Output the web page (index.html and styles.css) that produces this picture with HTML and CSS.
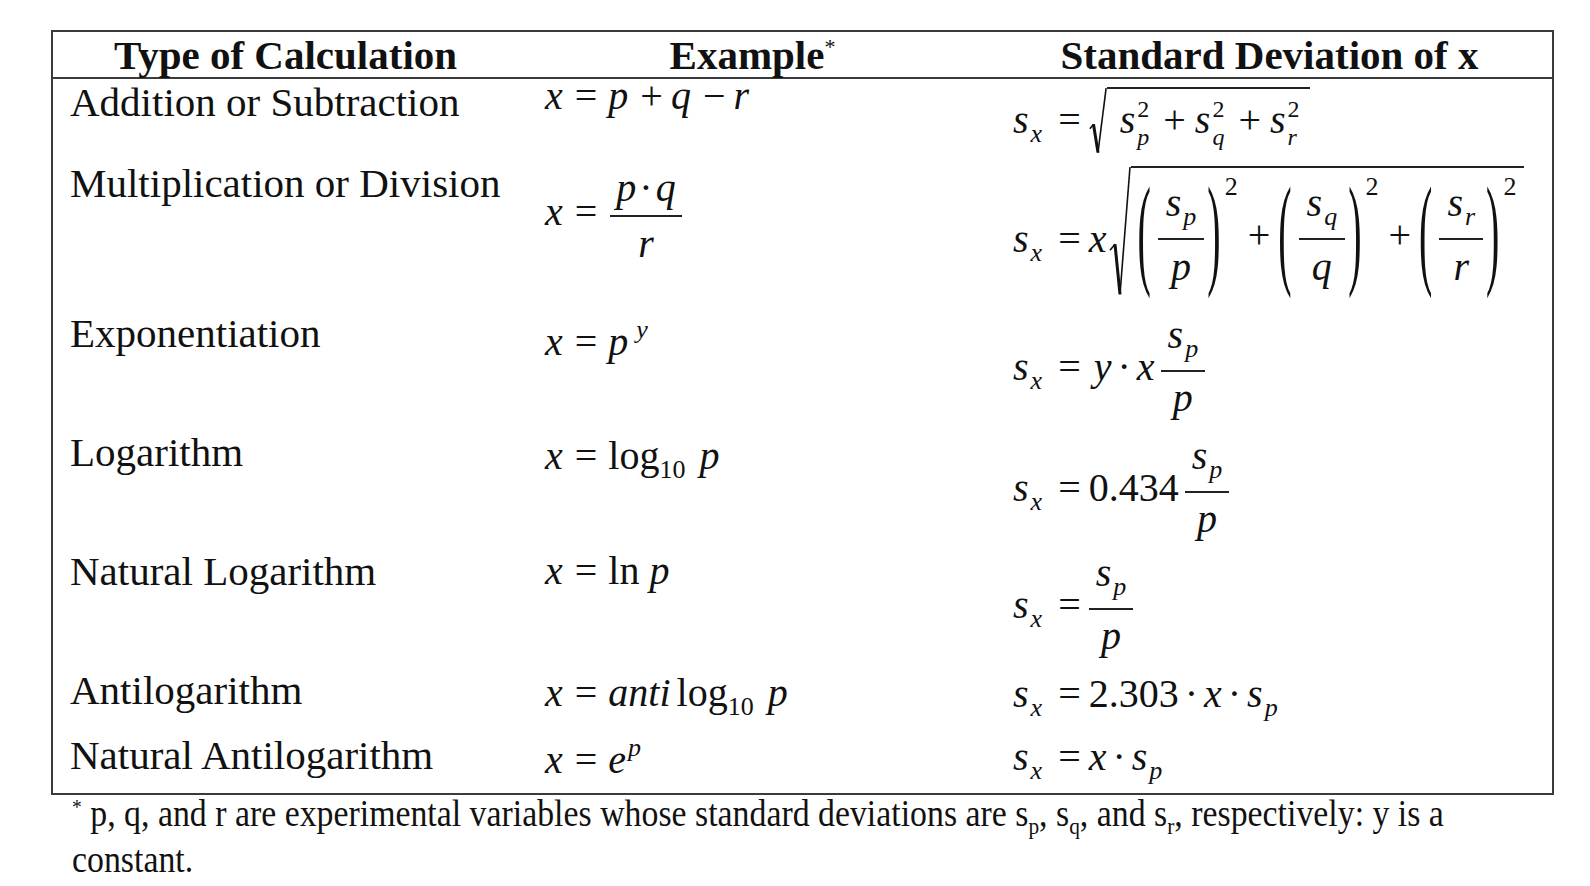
FILE: index.html
```html
<!DOCTYPE html>
<html lang="en">
<head>
<meta charset="utf-8">
<title>Propagation of uncertainty</title>
<link rel="stylesheet" href="styles.css">
</head>
<body>
<div class="page">
  <div class="tbl">
    <div class="row head">
      <div class="cell">Type of Calculation</div>
      <div class="cell">Example<span class="star">*</span></div>
      <div class="cell">Standard Deviation of x</div>
    </div>

    <div class="row r1">
      <div class="cell lab">Addition or Subtraction</div>
      <div class="cell ex"><var>x</var><span class="eq">=</span><var>p</var><span class="bin">+</span><var>q</var><span class="bin">−</span><var>r</var></div>
      <div class="cell sd"><var>s</var><var class="sub">x</var><span class="eq">=</span><span class="sqrt"><svg class="rad rad-sm" viewBox="0 0 20 60" preserveAspectRatio="none"><path d="M1 37 L5 33"/><path class="thick" d="M5 33 L10 58"/><path d="M10 58 L19 1"/></svg><span class="radicand rc1"><var>s</var><span class="ss"><span class="up">2</span><var class="dn">p</var></span><span class="bin">+</span><var>s</var><span class="ss"><span class="up">2</span><var class="dn">q</var></span><span class="bin">+</span><var>s</var><span class="ss"><span class="up">2</span><var class="dn">r</var></span></span></span></div>
    </div>

    <div class="row r2">
      <div class="cell lab">Multiplication or Division</div>
      <div class="cell ex"><var>x</var><span class="eq">=</span><span class="frac"><span class="num"><var>p</var><span class="dot">·</span><var>q</var></span><span class="den"><var>r</var></span></span></div>
      <div class="cell sd"><span class="lead"><var>s</var><var class="sub">x</var><span class="eq">=</span><var>x</var></span><span class="sqrt"><svg class="rad rad-lg" viewBox="0 0 22 130" preserveAspectRatio="none"><path d="M1 84 L6 78"/><path class="thick" d="M6 78 L11 128"/><path d="M11 128 L21 1"/></svg><span class="radicand rc2"><span class="par">(</span><span class="frac sp"><span class="num"><var>s</var><var class="sub">p</var></span><span class="den"><var>p</var></span></span><span class="par">)</span><span class="big2">2</span><span class="bin">+</span><span class="par">(</span><span class="frac sp"><span class="num"><var>s</var><var class="sub">q</var></span><span class="den"><var>q</var></span></span><span class="par">)</span><span class="big2">2</span><span class="bin">+</span><span class="par">(</span><span class="frac sp"><span class="num"><var>s</var><var class="sub">r</var></span><span class="den"><var>r</var></span></span><span class="par">)</span><span class="big2">2</span></span></span></div>
    </div>

    <div class="row r3">
      <div class="cell lab">Exponentiation</div>
      <div class="cell ex"><var>x</var><span class="eq">=</span><var>p</var><var class="sup">y</var></div>
      <div class="cell sd"><var>s</var><var class="sub">x</var><span class="eq">=</span><var>y</var><span class="dot">·</span><var>x</var><span class="frac sp"><span class="num"><var>s</var><var class="sub">p</var></span><span class="den"><var>p</var></span></span></div>
    </div>

    <div class="row r4">
      <div class="cell lab">Logarithm</div>
      <div class="cell ex"><var>x</var><span class="eq">=</span>log<span class="sub">10</span><var class="arg">p</var></div>
      <div class="cell sd"><var>s</var><var class="sub">x</var><span class="eq">=</span>0.434<span class="frac sp"><span class="num"><var>s</var><var class="sub">p</var></span><span class="den"><var>p</var></span></span></div>
    </div>

    <div class="row r5">
      <div class="cell lab">Natural Logarithm</div>
      <div class="cell ex"><var>x</var><span class="eq">=</span>ln<var class="arg-ln">p</var></div>
      <div class="cell sd"><var>s</var><var class="sub">x</var><span class="eq">=</span><span class="frac sp"><span class="num"><var>s</var><var class="sub">p</var></span><span class="den"><var>p</var></span></span></div>
    </div>

    <div class="row r6">
      <div class="cell lab">Antilogarithm</div>
      <div class="cell ex"><var>x</var><span class="eq">=</span><var class="anti">anti</var>log<span class="sub">10</span><var class="arg">p</var></div>
      <div class="cell sd"><var>s</var><var class="sub">x</var><span class="eq">=</span>2.303<span class="dot">·</span><var>x</var><span class="dot">·</span><var>s</var><var class="sub">p</var></div>
    </div>

    <div class="row r7">
      <div class="cell lab">Natural Antilogarithm</div>
      <div class="cell ex"><var>x</var><span class="eq">=</span><var>e</var><var class="sup">p</var></div>
      <div class="cell sd"><var>s</var><var class="sub">x</var><span class="eq">=</span><var>x</var><span class="dot">·</span><var>s</var><var class="sub">p</var></div>
    </div>
  </div>

  <p class="note"><sup>*</sup> p, q, and r are experimental variables whose standard deviations are s<sub>p</sub>, s<sub>q</sub>, and s<sub>r</sub>, respectively: y is a<br>constant.</p>
</div>
</body>
</html>
```

FILE: styles.css
```css
* { box-sizing: border-box; }

html, body {
  margin: 0;
  background: #fff;
  overflow: hidden;
}

body {
  font-family: "Liberation Serif", "Times New Roman", serif;
  color: #111;
  font-size: 40px;
  line-height: 40px;
}

var { font-style: italic; }

.page { padding: 30px 0 0 51px; }

.tbl {
  width: 1503px;
  border: 2px solid #3b3b3b;
}

.row {
  display: grid;
  grid-template-columns: 465px 469px 1fr;
}

.head {
  height: 47px;
  border-bottom: 2px solid #3b3b3b;
  font-size: 41px;
  font-weight: bold;
  text-align: center;
}
.head .cell { padding-top: 2.5px; }

.star {
  font-size: 22px;
  line-height: 0;
  vertical-align: 15px;
  font-weight: normal;
}

.r1 { height: 81px; }
.r2 { height: 150px; }
.r3, .r4, .r5 { height: 119px; }
.r6 { height: 65px; }
.r7 { height: 61px; }

.lab { padding: 2.5px 0 0 17px; font-size: 41px; }
.ex { padding-left: 27px; white-space: nowrap; }
.sd { padding-left: 26px; white-space: nowrap; }

.r1 .ex { margin-top: -3.5px; }
.r2 .ex { padding-top: 7.8px; }
.r3 .ex { padding-top: 11.5px; }
.r4 .ex { padding-top: 6.5px; }
.r5 .ex { padding-top: 2.5px; }
.r6 .ex { padding-top: 5.5px; }
.r7 .ex { padding-top: 7.5px; }

.r1 .sd { padding-top: 8px; }
.r2 .sd { padding-top: 6px; }
.r3 .sd { padding-top: 4.8px; }
.r4 .sd { padding-top: 6.8px; }
.r5 .sd { padding-top: 4.8px; }
.r6 .sd { padding-top: 6.5px; }
.r7 .sd { padding-top: 4.5px; }

.lead { vertical-align: -4px; }

/* operators */
.eq { margin: 0 11px 0 12px; }
.sd .eq { margin: 0 8px 0 16px; }
.r3 .sd .eq { margin-right: 13px; }
.bin { margin: 0 8px 0 12px; }
.dot { margin: 0 6px; }
.num .dot { margin: 0 3px; }

.sub {
  font-size: 26px;
  line-height: 0;
  vertical-align: -9px;
  margin-left: 2px;
}
.ex .sub { margin-left: 0; }
.sup {
  font-size: 26px;
  line-height: 0;
  vertical-align: 17px;
  margin-left: 2px;
}
.r3 .sup { margin-left: 8px; }
.arg { margin-left: 14px; }
.arg-ln { margin-left: 10px; }
.anti { margin-right: 6px; }

/* stacked sub/superscript */
.ss {
  display: inline-flex;
  flex-direction: column;
  font-size: 24px;
  vertical-align: 16px;
  margin: 0 2px 0 2px;
}
.ss .up { line-height: 20px; font-style: normal; }
.ss .dn { line-height: 36px; }

/* fractions */
.frac {
  display: inline-flex;
  flex-direction: column;
  vertical-align: middle;
  text-align: center;
  margin: 0 2px;
}
.num {
  border-bottom: 2px solid #222;
  padding: 0 6px 7px;
}
.den { padding: 7px 6px 0; }
.frac.sp { margin: 0 2px 0 6px; }
.r5 .frac.sp { margin-left: 0; }
.frac.sp .num { padding: 0 7px 15px; }
.frac.sp .den { padding: 6.5px 7px 8.5px; }

/* radicals */
.sqrt {
  display: inline-flex;
  vertical-align: baseline;
}
.r2 .sqrt { margin-left: 3px; }
.rad {
  flex: none;
  align-self: stretch;
  height: auto;
  overflow: visible;
}
.rad-sm { width: 18px; }
.rad-lg { width: 22px; }
.rad path {
  fill: none;
  stroke: #111;
  stroke-width: 1.6;
  vector-effect: non-scaling-stroke;
}
.rad path.thick { stroke-width: 3; }
.radicand {
  align-self: baseline;
  border-top: 2px solid #222;
}
.rc1 { padding: 9.9px 8px 0 13px; }
.rc1 .bin { margin: 0 9px 0 12px; }
.rc2 { padding: 15.3px 8px 1px 6px; }
.rc2 .bin { margin: 0 8px 0 10px; }
.rc2 .frac.sp { margin: 0 3px 0 7px; }
.rc2 .frac.sp .num { padding-left: 8px; padding-right: 8px; }
.rc2 .frac.sp .den { padding-left: 8px; padding-right: 8px; }

.par {
  display: inline-block;
  transform: translateY(4.2px) scaleY(3.05);
  transform-origin: 50% 23.5px;
}
.big2 {
  font-size: 26px;
  line-height: 0;
  vertical-align: 53px;
  margin-left: 4px;
}

/* footnote */
.note {
  margin: -5px 0 0 21px;
  width: 1620px;
  white-space: nowrap;
  font-size: 38px;
  line-height: 46px;
  transform: scaleX(0.89);
  transform-origin: 0 0;
}
.note sup {
  font-size: 22px;
  line-height: 0;
  vertical-align: 12px;
}
.note sub {
  font-size: 24px;
  line-height: 0;
  vertical-align: -8px;
}
```
